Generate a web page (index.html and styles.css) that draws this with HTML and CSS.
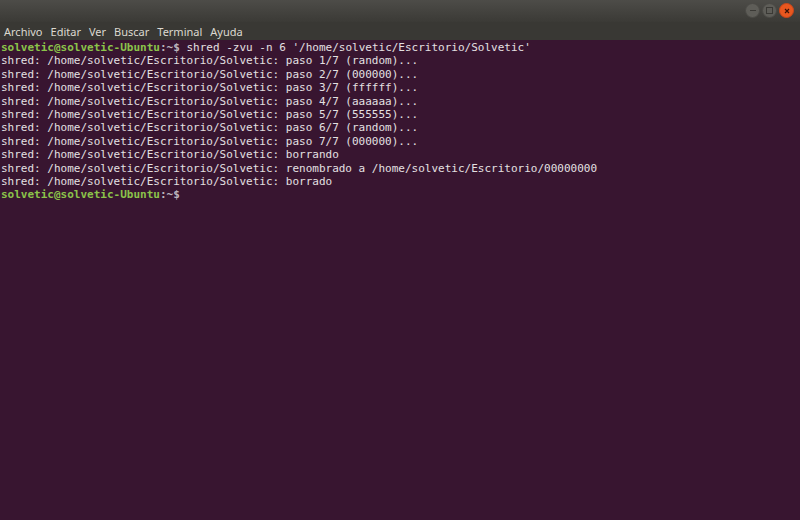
FILE: index.html
```html
<!DOCTYPE html>
<html>
  <head>
    <meta charset="utf-8" />
    <title>Terminal</title>
    <link rel="stylesheet" href="styles.css">
  </head>
  <body>
    <div class="window">
      <div class="titlebar">
        <div class="controls">
          <span class="btn min"><i></i></span>
          <span class="btn max"><i></i></span>
          <span class="btn close">
            <svg width="6" height="6" viewBox="0 0 6 6"><path d="M1 1L5 5M5 1L1 5" stroke="#3a1208" stroke-width="1.2"/></svg>
          </span>
        </div>
      </div>
      <div class="menubar">
        <span>Archivo</span>
        <span>Editar</span>
        <span>Ver</span>
        <span>Buscar</span>
        <span>Terminal</span>
        <span>Ayuda</span>
      </div>
      <div class="terminal">
        <div class="line"><span class="user">solvetic@solvetic-Ubuntu</span><span class="path">:~$</span> shred -zvu -n 6 '/home/solvetic/Escritorio/Solvetic'</div>
        <div class="line">shred: /home/solvetic/Escritorio/Solvetic: paso 1/7 (random)...</div>
        <div class="line">shred: /home/solvetic/Escritorio/Solvetic: paso 2/7 (000000)...</div>
        <div class="line">shred: /home/solvetic/Escritorio/Solvetic: paso 3/7 (ffffff)...</div>
        <div class="line">shred: /home/solvetic/Escritorio/Solvetic: paso 4/7 (aaaaaa)...</div>
        <div class="line">shred: /home/solvetic/Escritorio/Solvetic: paso 5/7 (555555)...</div>
        <div class="line">shred: /home/solvetic/Escritorio/Solvetic: paso 6/7 (random)...</div>
        <div class="line">shred: /home/solvetic/Escritorio/Solvetic: paso 7/7 (000000)...</div>
        <div class="line">shred: /home/solvetic/Escritorio/Solvetic: borrando</div>
        <div class="line">shred: /home/solvetic/Escritorio/Solvetic: renombrado a /home/solvetic/Escritorio/00000000</div>
        <div class="line">shred: /home/solvetic/Escritorio/Solvetic: borrado</div>
        <div class="line"><span class="user">solvetic@solvetic-Ubuntu</span><span class="path">:~$</span></div>
      </div>
    </div>
  </body>
</html>
```
FILE: styles.css
```css
html,
body {
  margin: 0;
  height: 100%;
  background: #381530;
}
.window {
  display: flex;
  flex-direction: column;
  height: 520px;
  width: 800px;
}
.titlebar {
  height: 22px;
  background: linear-gradient(#4d4c48, #3b3a36);
  display: flex;
  justify-content: flex-end;
  align-items: center;
}
.controls {
  display: flex;
  gap: 2px;
  margin-right: 6px;
  margin-top: -1px;
}
.btn {
  width: 13px;
  height: 13px;
  border-radius: 50%;
  background: #5e5d58;
  border: 1px solid #4a4945;
  display: flex;
  align-items: center;
  justify-content: center;
}
.btn i {
  display: block;
}
.min i {
  width: 6px;
  height: 1px;
  background: #3a3935;
}
.max i {
  width: 5px;
  height: 5px;
  border: 1px solid #3a3935;
}
.close {
  background: #e8571f;
  border-color: #c9461a;
}
.menubar {
  height: 18px;
  background: #393834;
  color: #dcd8d0;
  font-family: "Noto Sans", sans-serif;
  font-size: 11px;
  display: flex;
  align-items: center;
  gap: 8px;
  padding-left: 4px;
}
.terminal {
  flex: 1;
  padding: 1px 0 0 1px;
  font-family: "DejaVu Sans Mono", monospace;
  font-size: 11px;
  line-height: 13.4px;
  color: #e4e0e2;
}
.line {
  white-space: pre;
}
.user {
  color: #8bc34a;
  font-weight: bold;
}
.path {
  color: #bcb4bc;
  font-weight: bold;
}
```
